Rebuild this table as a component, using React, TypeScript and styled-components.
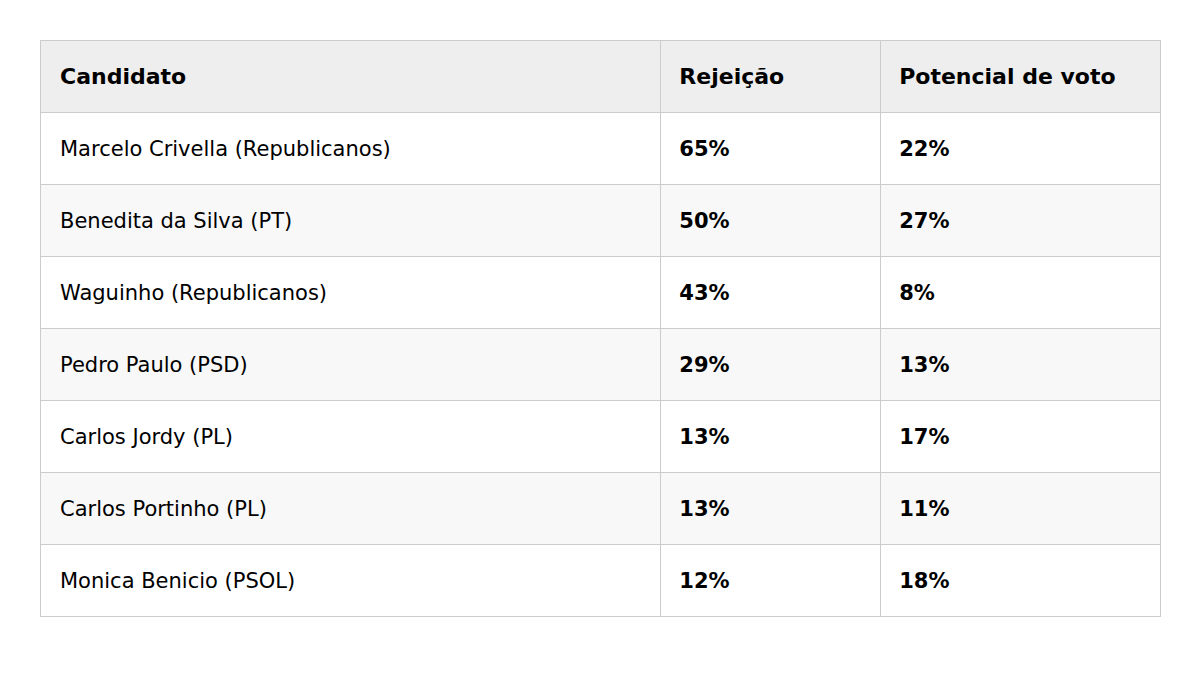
import React from "react";
import styled, { createGlobalStyle } from "styled-components";

const Global = createGlobalStyle`
  html, body { margin: 0; padding: 0; background: #fff; }
  body { font-family: "DejaVu Sans", sans-serif; color: #000; }
`;

const Page = styled.div`
  padding: 40px;
`;

const Table = styled.table`
  width: 1121px;
  border-collapse: collapse;
  font-size: 21px;
`;

const HeadCell = styled.th<{ $w: number }>`
  width: ${(p) => p.$w}px;
  height: 72px;
  padding: 0 19px 0 18px;
  box-sizing: border-box;
  text-align: left;
  font-size: 22px;
  font-weight: bold;
  background: #eeeeee;
  border: 1px solid #cccccc;
  &:first-child { padding-left: 19px; }
`;

const Row = styled.tr<{ $alt: boolean }>`
  background: ${(p) => (p.$alt ? "#f8f8f8" : "#ffffff")};
`;

const Cell = styled.td<{ $bold?: boolean }>`
  height: 72px;
  padding: 0 19px 0 18px;
  box-sizing: border-box;
  border: 1px solid #cccccc;
  font-weight: ${(p) => (p.$bold ? "bold" : "normal")};
  &:first-child { padding-left: 19px; }
`;

const rows = [
  ["Marcelo Crivella (Republicanos)", "65%", "22%"],
  ["Benedita da Silva (PT)", "50%", "27%"],
  ["Waguinho (Republicanos)", "43%", "8%"],
  ["Pedro Paulo (PSD)", "29%", "13%"],
  ["Carlos Jordy (PL)", "13%", "17%"],
  ["Carlos Portinho (PL)", "13%", "11%"],
  ["Monica Benicio (PSOL)", "12%", "18%"],
];

export default function App() {
  return (
    <Page>
      <Global />
      <Table>
        <thead>
          <tr>
            <HeadCell $w={621}>Candidato</HeadCell>
            <HeadCell $w={220}>Rejeição</HeadCell>
            <HeadCell $w={280}>Potencial de voto</HeadCell>
          </tr>
        </thead>
        <tbody>
          {rows.map((r, i) => (
            <Row key={r[0]} $alt={i % 2 === 1}>
              <Cell>{r[0]}</Cell>
              <Cell $bold>{r[1]}</Cell>
              <Cell $bold>{r[2]}</Cell>
            </Row>
          ))}
        </tbody>
      </Table>
    </Page>
  );
}
